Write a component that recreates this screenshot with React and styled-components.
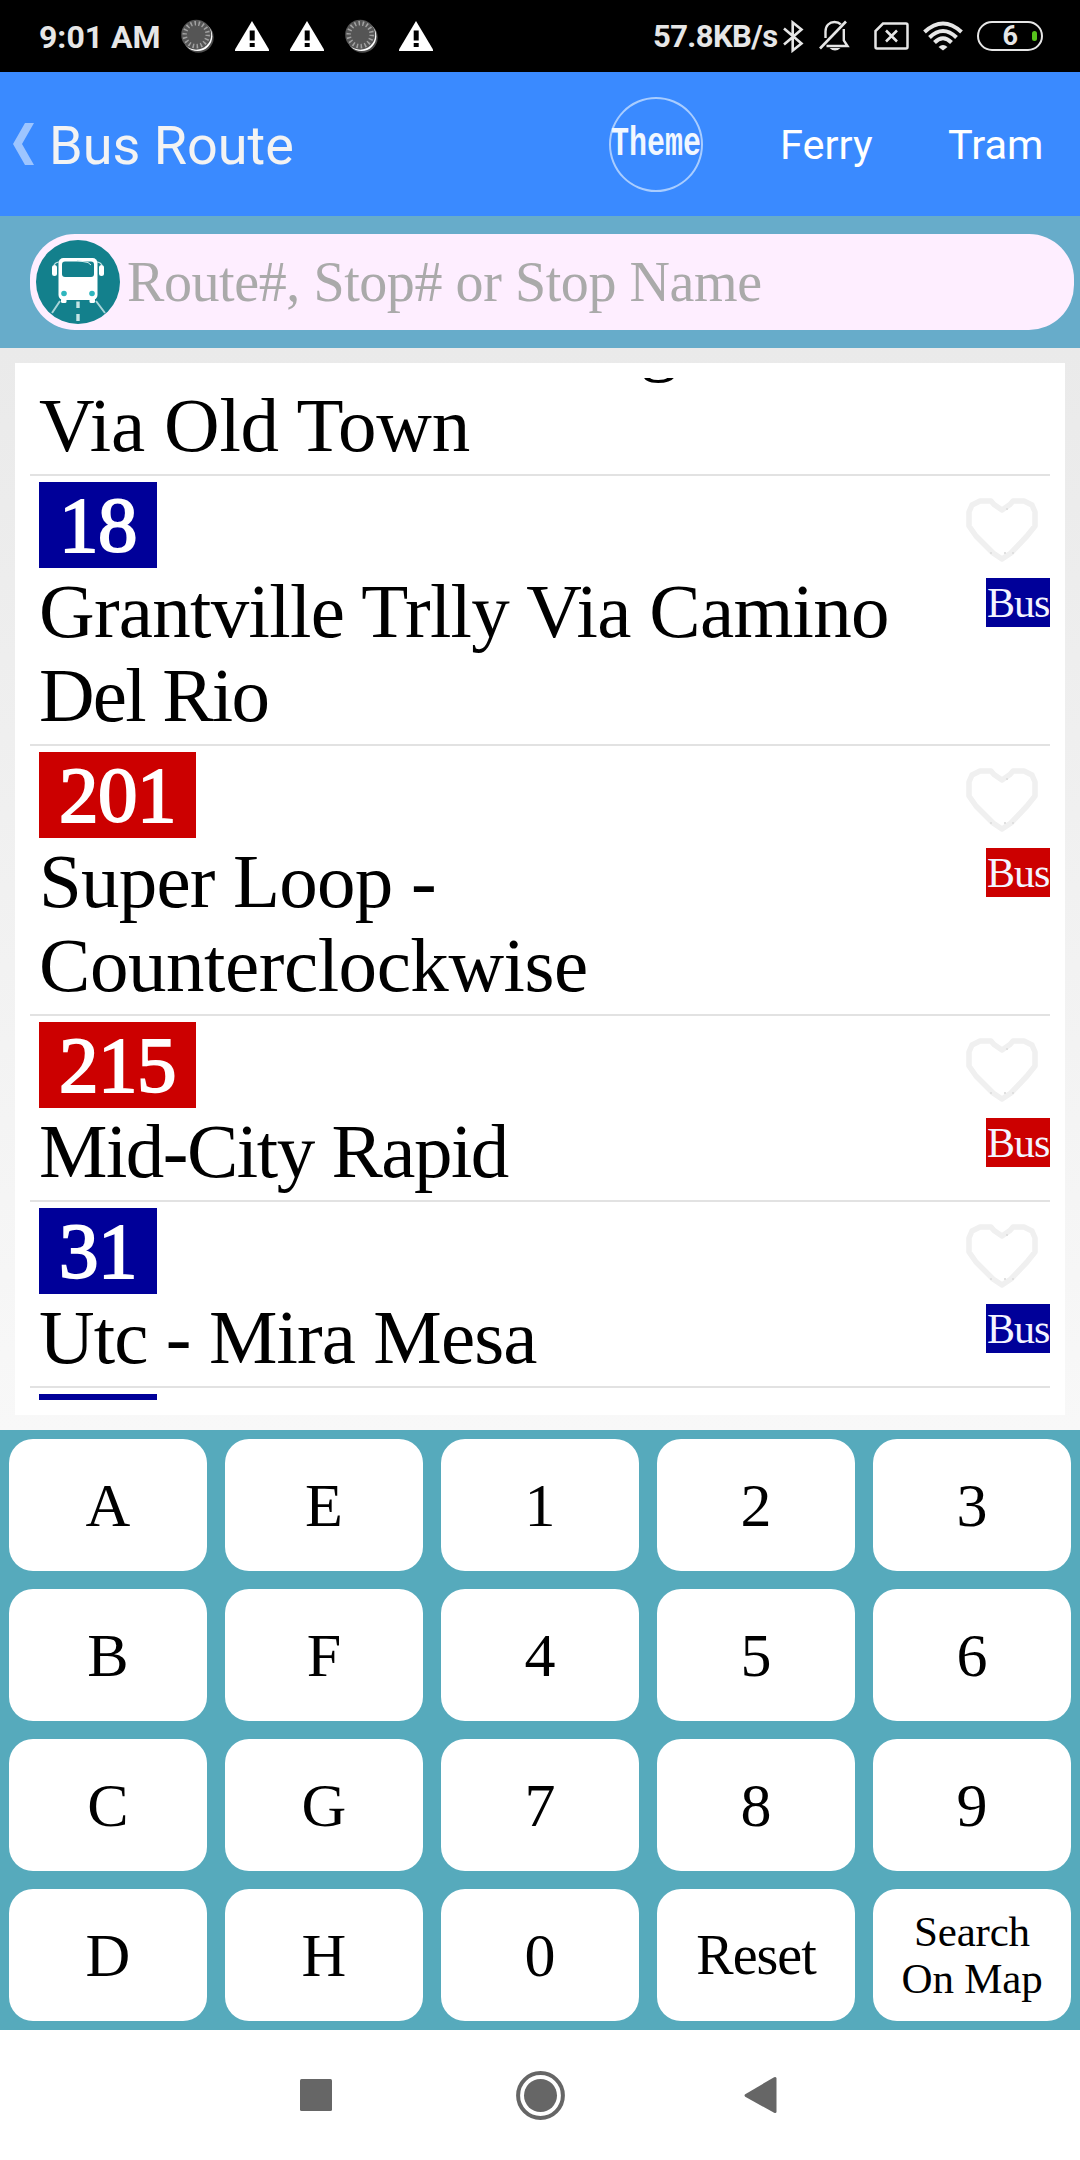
import React from 'react';
import styled, { createGlobalStyle } from 'styled-components';

const navy = '#000099';
const red = '#cc0000';
const serif = "'Liberation Serif', 'Times New Roman', serif";
const sans = "Roboto, 'Noto Sans', sans-serif";

const routes = [
  { number: '18', color: navy, lines: [['Grantville Trlly Via Camino', -0.7], ['Del Rio', -1.8]] },
  { number: '201', color: red, lines: [['Super Loop -', -0.8], ['Counterclockwise', -0.45]] },
  { number: '215', color: red, lines: [['Mid-City Rapid', -1.5]] },
  { number: '31', color: navy, lines: [['Utc - Mira Mesa', -0.9]] },
];

const keys = [
  'A', 'E', '1', '2', '3',
  'B', 'F', '4', '5', '6',
  'C', 'G', '7', '8', '9',
  'D', 'H', '0',
];

const Spinner = () => (
  <svg width="33" height="34" viewBox="0 0 33 34">
    <circle cx="17.5" cy="18.5" r="15.2" fill="#4c4c4c" />
    <circle cx="16.5" cy="17.2" r="14.8" fill="#fff" />
    <circle cx="15.2" cy="15.7" r="15" fill="#555" />
    <circle cx="15.2" cy="15.7" r="11.5" fill="none" stroke="#a2a2a2" strokeWidth="4.5" strokeDasharray="1.5 2.51" />
  </svg>
);

const Warning = () => (
  <svg width="34" height="30" viewBox="0 0 34 30">
    <path d="M17 0L34 28.5V30H0V28.5Z" fill="#fff" />
    <path d="M14.7 9.5h5v10h-5zM14.7 22h5v4h-5z" fill="#000" />
  </svg>
);

const Bluetooth = () => (
  <svg width="21" height="33" viewBox="0 0 21 33" fill="none" stroke="#e6e6e6" strokeWidth="2.6">
    <path d="M1 8.5L18.5 23.5L9.7 30.5V2.5L18.5 9.5L1 24.5" />
  </svg>
);

const BellOff = () => (
  <svg width="31" height="32" viewBox="0 0 31 32" fill="none" stroke="#e6e6e6" strokeWidth="2.4">
    <path d="M6.5 18V11.5C6.5 5.5 10.5 2 15.5 2Q19.5 2 21.8 4.4M24.8 9V20.5L28.5 26H7.5" />
    <path d="M1 28.5L27 1.5" strokeWidth="2.6" />
    <path d="M10.5 28h11q-5.5 5-11 0z" fill="#e6e6e6" stroke="none" />
  </svg>
);

const SimOff = () => (
  <svg width="35" height="28" viewBox="0 0 35 28" fill="none" stroke="#e6e6e6" strokeWidth="2.5">
    <path d="M9 1.5H32Q33.5 1.5 33.5 3V25Q33.5 26.5 32 26.5H3Q1.5 26.5 1.5 25V9Z" />
    <path d="M12 8.5L23 19.5M23 8.5L12 19.5" />
  </svg>
);

const Wifi = () => (
  <svg width="40" height="30" viewBox="0 0 40 30" fill="none" stroke="#e6e6e6" strokeWidth="4">
    <path d="M1.5 11Q20-6 38.5 11" />
    <path d="M6.5 16.5Q20 3.5 33.5 16.5" />
    <path d="M11.5 21.5Q20 13 28.5 21.5" />
    <path d="M15.5 26Q20 22 24.5 26L20 29.5Z" fill="#e6e6e6" stroke="none" />
  </svg>
);

const BackArrow = () => (
  <svg width="21" height="42" viewBox="0 0 21 42">
    <path d="M12 0H21L9 21L21 42H12L0 21Z" fill="#9dc5ff" />
  </svg>
);

const BusLogo = () => (
  <svg width="84" height="84" viewBox="0 0 84 84">
    <circle cx="42" cy="42" r="42" fill="#13808c" />
    <rect x="22.5" y="18" width="39" height="42" rx="5" fill="#fff" />
    <rect x="26" y="21.5" width="32" height="15.5" rx="3" fill="#13808c" />
    <path d="M41 20.5L52 22.5L55 25" stroke="#d5eef0" strokeWidth="1" fill="none" />
    <rect x="16" y="25" width="5" height="11" rx="2.5" fill="#fff" />
    <rect x="63" y="25" width="5" height="11" rx="2.5" fill="#fff" />
    <path d="M18 25Q20 22 23 22M66 25Q64 22 61 22" stroke="#b9dfe2" strokeWidth="1.2" fill="none" />
    <rect x="25" y="58" width="5.5" height="5" rx="1.5" fill="#fff" />
    <rect x="53.5" y="58" width="5.5" height="5" rx="1.5" fill="#fff" />
    <circle cx="28" cy="53.5" r="2.8" fill="#2fb6be" />
    <circle cx="56" cy="53.5" r="2.8" fill="#2fb6be" />
    <path d="M24 61L16 73M60 61L69 73" stroke="#a9d5d9" strokeWidth="2" />
    <path d="M42 61.5V68M42 74V81" stroke="#c5e4e6" strokeWidth="3.4" />
  </svg>
);

const Heart = () => (
  <Favorite width="72" height="64" viewBox="0 0 72 64">
    <path
      d="M36 12L28 6.5L25 3H14L6 7L3 14V28L10 38L27 55L36 61L45 55L61 38L69 28V14L66 7L58 3H47L44 6.5Z"
      fill="none"
      stroke="#f0f0f0"
      strokeWidth="5.5"
      strokeLinejoin="round"
    />
    <path d="M24 54h2v2h-2zM38 54h2v2h-2zM46 54h2v2h-2zM40 10h2v2h-2z" fill="#e0e0e0" />
  </Favorite>
);

const Route = ({ route }) => (
  <RouteRow>
    <RouteInfo>
      <RouteNumber $color={route.color}>{route.number}</RouteNumber>
      {route.lines.map(([text, tracking]) => (
        <Destination key={text} $tracking={tracking}>{text}</Destination>
      ))}
    </RouteInfo>
    <RouteSide>
      <Heart />
      <BusTag $color={route.color}>Bus</BusTag>
    </RouteSide>
  </RouteRow>
);

const App = () => (
  <>
    <GlobalStyle />
    <Screen>
      <StatusBar>
        <Clock>9:01 AM</Clock>
        <Notifications>
          <Spinner />
          <Warning />
          <Warning />
          <Spinner />
          <Warning />
        </Notifications>
        <Speed>57.8KB/s</Speed>
        <SystemIcons>
          <Bluetooth />
          <BellOff />
          <SimOff />
          <Wifi />
          <Battery>
            <Charge>6</Charge>
            <ChargeLevel />
          </Battery>
        </SystemIcons>
      </StatusBar>

      <Header>
        <BackArrow />
        <Title>Bus Route</Title>
        <ThemeButton><ThemeLabel>Theme</ThemeLabel></ThemeButton>
        <HeaderLink $width={90}>Ferry</HeaderLink>
        <HeaderLink $width={94}>Tram</HeaderLink>
      </Header>

      <SearchBar>
        <SearchField>
          <BusLogo />
          <Placeholder>Route#, Stop# or Stop Name</Placeholder>
        </SearchField>
      </SearchBar>

      <ListArea>
        <ListCard>
          <RouteList>
            <ScrolledRow>
              <RouteInfo>
                <Destination $tracking={-0.4}>Downtown San Diego</Destination>
                <Destination $tracking={-0.2}>Via Old Town</Destination>
              </RouteInfo>
            </ScrolledRow>
            {routes.map(route => <Route key={route.number} route={route} />)}
            <RouteRow>
              <RouteInfo><RouteNumber $color={navy}>35</RouteNumber></RouteInfo>
            </RouteRow>
          </RouteList>
        </ListCard>
      </ListArea>

      <Keypad>
        {keys.map(key => <Key key={key}>{key}</Key>)}
        <Key $size={56} $tracking={-1}>Reset</Key>
        <Key $size={43} $tracking={-0.2}>Search<br />On Map</Key>
      </Keypad>

      <NavBar>
        <svg width="48" height="50" viewBox="0 0 48 50" fill="#666">
          <rect x="8" y="9" width="32" height="32" rx="1.5" />
        </svg>
        <svg width="49" height="50" viewBox="0 0 49 50" fill="#666">
          <circle cx="24.5" cy="25.5" r="22.4" fill="none" stroke="#666" strokeWidth="4" />
          <circle cx="24.5" cy="25.5" r="16.5" />
        </svg>
        <svg width="48" height="50" viewBox="0 0 48 50" fill="#666">
          <path d="M4.2 24.3L33.1 7.2Q35.5 6.3 35.5 8.5V41.5Q35.5 43.7 33.1 42.8L4.2 26.7Q2.8 25.5 4.2 24.3Z" />
        </svg>
      </NavBar>
    </Screen>
  </>
);
export default App;

const GlobalStyle = createGlobalStyle`
  * {
    box-sizing: border-box;
  }
  body {
    margin: 0;
    background: #fff;
  }
  svg {
    display: block;
    flex: none;
  }
`;

const Screen = styled.div`
  display: flex;
  flex-direction: column;
  width: 1080px;
  height: 2160px;
  overflow: hidden;
  white-space: nowrap;
`;

const StatusBar = styled.div`
  display: flex;
  align-items: center;
  height: 72px;
  padding: 0 37px 0 39px;
  background: #000;
  color: #e6e6e6;
  font-family: ${sans};
  font-weight: 700;
`;

const Clock = styled.div`
  width: 142px;
  font-size: 32px;
  line-height: 38px;
  padding-top: 1px;
`;

const Notifications = styled.div`
  display: flex;
  align-items: center;
  gap: 21px;
  flex: 1;
`;

const Speed = styled.div`
  width: 130px;
  font-size: 31px;
  letter-spacing: -0.6px;
`;

const SystemIcons = styled.div`
  display: flex;
  align-items: center;
  gap: 14px;

  svg:nth-child(2) {
    margin-left: 1px;
  }
  svg:nth-child(3) {
    margin-left: 10px;
  }
`;

const Battery = styled.div`
  display: flex;
  align-items: center;
  justify-content: flex-end;
  gap: 14px;
  width: 66px;
  height: 30px;
  padding-right: 4px;
  border: 2.5px solid #e6e6e6;
  border-radius: 15px;
`;

const Charge = styled.span`
  font-size: 27px;
  line-height: 30px;
`;

const ChargeLevel = styled.i`
  width: 5px;
  height: 10px;
  border-radius: 2.5px;
  background: #57c21c;
`;

const Header = styled.header`
  display: flex;
  align-items: center;
  height: 144px;
  padding-left: 13px;
  background: #3a8aff;
  font-family: ${sans};
`;

const Title = styled.h1`
  flex: none;
  width: 560px;
  margin: 0 0 0 15px;
  padding-top: 4px;
  color: #f3f3f3;
  font-size: 54px;
  line-height: 64px;
  font-weight: 400;
`;

const ThemeButton = styled.div`
  display: flex;
  flex: none;
  align-items: center;
  justify-content: center;
  width: 94px;
  height: 95px;
  margin-right: 77px;
  border: 2px solid #a9cdff;
  border-radius: 50%;
`;

const ThemeLabel = styled.span`
  padding-top: 2px;
  color: #f1f7ff;
  font: 700 40px/40px 'Liberation Mono', monospace;
  transform: scaleX(0.75);
`;

const HeaderLink = styled.span`
  flex: none;
  width: ${prop => prop.$width}px;
  padding-top: 1px;
  color: #fff;
  font-size: 41.5px;

  & + & {
    margin-left: 78px;
  }
`;

const SearchBar = styled.div`
  height: 132px;
  padding: 18px 6px 18px 30px;
  background: #67acca;
`;

const SearchField = styled.div`
  display: flex;
  align-items: center;
  gap: 7px;
  height: 96px;
  padding-left: 6px;
  border-radius: 45px;
  background: #feeeff;
`;

const Placeholder = styled.span`
  color: #aaa;
  font: 56px/64px ${serif};
  letter-spacing: -0.42px;
`;

const ListArea = styled.main`
  height: 1082px;
  padding: 15px;
  background: linear-gradient(#eaeaea, #f8f8f8);
`;

const ListCard = styled.section`
  height: 1052px;
  padding: 15px;
  background: #fff;
`;

const RouteList = styled.div`
  height: 1022px;
  overflow: hidden;
`;

const RouteRow = styled.article`
  display: flex;
  justify-content: space-between;
  padding: 6px 0 8px 9px;
  border-bottom: 2px solid #e2e2e2;
`;

const ScrolledRow = styled(RouteRow)`
  margin-top: -86px;
`;

const RouteInfo = styled.div`
  display: flex;
  flex-direction: column;
  align-items: flex-start;
`;

const RouteNumber = styled.div`
  height: 86px;
  padding: 0 20px;
  background: ${prop => prop.$color};
  color: #fff;
  font: 79px/85px ${serif};
  letter-spacing: -0.5px;
  -webkit-text-stroke: 2px #fff;
`;

const Destination = styled.div`
  height: 84px;
  padding-top: 1px;
  color: #000;
  font: 77px/85px ${serif};
  letter-spacing: ${prop => prop.$tracking}px;
`;

const RouteSide = styled.div`
  display: flex;
  flex-direction: column;
  align-items: flex-end;
  padding-top: 16px;
`;

const Favorite = styled.svg`
  margin: 0 12px 16px 0;
`;

const BusTag = styled.div`
  width: 64px;
  height: 49px;
  padding-left: 1px;
  background: ${prop => prop.$color};
  color: #f4f4ff;
  font: 42px/51px ${serif};
  letter-spacing: -1px;
`;

const Keypad = styled.div`
  display: grid;
  grid-template-columns: repeat(5, 198px);
  grid-auto-rows: 132px;
  gap: 18px;
  height: 600px;
  padding: 9px;
  background: #56aabc;
`;

const Key = styled.button`
  padding: 0;
  border: 0;
  border-radius: 24px;
  background: #fff;
  color: #000;
  font-family: ${serif};
  font-size: ${prop => prop.$size || 62}px;
  line-height: 47px;
  letter-spacing: ${prop => prop.$tracking || 0}px;
`;

const NavBar = styled.nav`
  display: flex;
  align-items: center;
  gap: 176px;
  height: 130px;
  padding-left: 292px;
  background: #fff;
`;
